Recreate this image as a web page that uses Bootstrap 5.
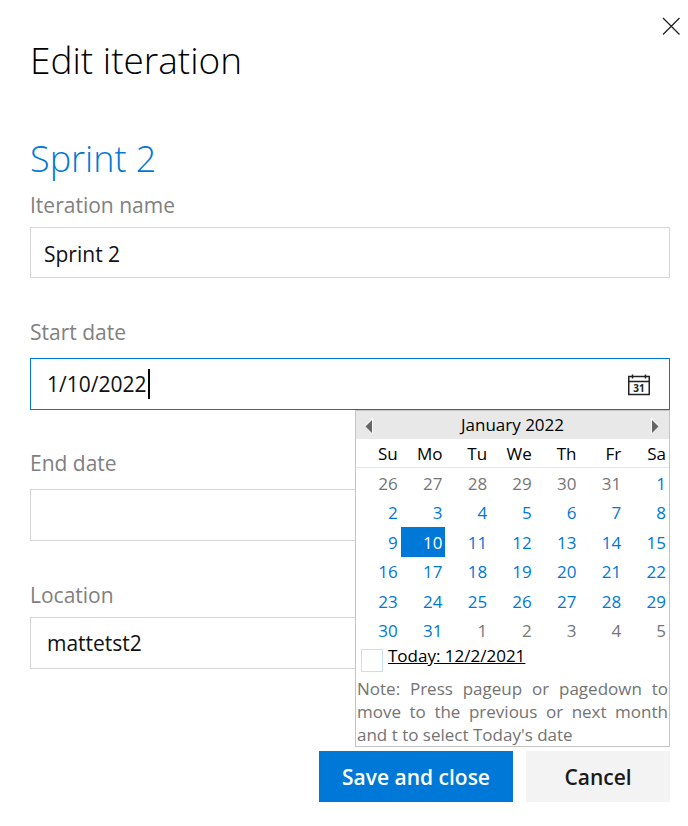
<!DOCTYPE html>
<html lang="en">
<head>
<meta charset="utf-8">
<meta name="viewport" content="width=device-width, initial-scale=1">
<title>Edit iteration</title>
<link href="https://cdn.jsdelivr.net/npm/bootstrap@5.3.0/dist/css/bootstrap.min.css" rel="stylesheet">
<style>
body { font-family: "Open Sans", "Noto Sans", sans-serif; font-size: 21px; line-height: 28px; color: #000; background: #fff; }
.dialog-pane { padding: 16px 18px 24px 30px; }
.close-btn { width: 20px; height: 20px; margin-right: -11px; }
.pane-title { font-size: 37px; font-weight: 300; line-height: 48px; }
.sprint-title { font-size: 36px; font-weight: 300; line-height: 48px; color: #0078d7; margin-top: 51px; }
.field-label { color: #808080; line-height: 28px; font-weight: 400; }
.field-block { margin-bottom: 40px; }
.start-block { margin-bottom: 39px; }
.field-box { border: 1px solid #d6d6d6; border-radius: 0; height: 52px; padding: 0 16px; font-size: 21px; color: #111; }
.name-box { padding: 2px 13px 0; height: 51px; }
.field-box:focus, .field-box:focus-within { border-color: #0078d7; box-shadow: none; }
.active-box { border-color: #0078d7; }
.date-input { width: 101px; font-size: 21px; color: #111; outline: 0; }
.text-caret { width: 2px; height: 30px; background: #000; }
.cal-toggle { width: 24px; height: 24px; margin-right: 2px; }
.cal-toggle text { font: 700 10px "Open Sans", sans-serif; }
.cal-pop { top: 100%; right: 0; width: 315px; border: 1px solid #c4c4c4; font-size: 17px; line-height: 22px; z-index: 5; }
.cal-head { height: 28px; background: #e8e8e8; padding: 0 8px; }
.cal-head button { width: 10px; height: 18px; }
.cal-grid { width: 100%; height: 206px; table-layout: fixed; border-collapse: separate; border-spacing: 0; text-align: right; }
.cal-grid th { font-weight: 400; border-bottom: 1px solid #e8e8e8; }
.cal-grid th, .cal-grid td { padding: 2px 3px 0 0; height: 29px; }
.cal-grid button { color: #0078d7; }
.cal-grid .outside button { color: #767676; }
.cal-grid .chosen { background: #0078d7; }
.cal-grid .chosen button { color: #fff; }
.today-check { width: 22px; height: 23px; border: 1px solid #c7e0f4; appearance: none; margin: 4px 5px 0; }
.cal-note { color: #737373; line-height: 23px; padding: 5px 1px 0; text-align: justify; font-size: 17px; }
.actions { gap: 13px; margin-top: 82px; }
.act-btn { height: 51px; border-radius: 0; border: 0; font-size: 21px; font-weight: 600; line-height: 28px; }
.act-save, .act-save:hover { background: #0078d7; color: #fff; width: 194px; }
.act-cancel, .act-cancel:hover { background: #f3f3f3; color: #1a1a1a; width: 144px; }
</style>
</head>
<body>
<main class="dialog-pane">
  <div class="d-flex justify-content-end">
    <button type="button" class="close-btn btn p-0 border-0 d-flex" aria-label="Close">
      <svg width="20" height="20" viewBox="0 0 20 20" fill="none" stroke="#222" stroke-width="1.3"><path d="M2 2l16.500 16.500M18.500 2l-16.500 16.500"/></svg>
    </button>
  </div>
  <h1 class="pane-title mb-0">Edit iteration</h1>
  <h2 class="sprint-title mb-0">Sprint 2</h2>
  <form>
    <div class="field-block pt-2">
      <label class="field-label d-block mb-2" for="iter">Iteration name</label>
      <input class="form-control field-box name-box" id="iter" type="text" value="Sprint 2">
    </div>
    <div class="start-block">
      <label class="field-label d-block mb-2 pb-1" for="start">Start date</label>
      <div class="position-relative">
        <div class="field-box active-box d-flex align-items-center">
          <input class="date-input border-0 p-0 bg-transparent" id="start" type="text" value="1/10/2022">
          <span class="text-caret"></span>
          <button type="button" class="cal-toggle btn p-0 border-0 d-flex ms-auto" aria-label="Open calendar">
            <svg width="24" height="24" viewBox="0 0 24 24" fill="none" stroke="#222"><path stroke-width="1.5" d="M1.750 4.500h20.500v18h-20.500zM1.750 9.500h20.500"/><path stroke-width="1.500" d="M5.500 2.500v4M18.500 2.500v4"/><text x="12" y="20" text-anchor="middle" fill="#222" stroke="none">31</text></svg>
          </button>
        </div>
        <div class="cal-pop position-absolute bg-white">
          <div class="cal-head d-flex align-items-center justify-content-between">
            <button type="button" class="btn p-0 border-0 d-flex" aria-label="Previous month"><svg width="10" height="18" viewBox="0 0 10 18"><path d="M9 1v17L1 10z" fill="#fff" opacity=".7"/><path d="M8 4v13L1.500 10.500z" fill="#666"/></svg></button>
            <span>January 2022</span>
            <button type="button" class="btn p-0 border-0 d-flex" aria-label="Next month"><svg width="10" height="18" viewBox="0 0 10 18"><path d="M0 1v17l8-8z" fill="#fff" opacity=".7"/><path d="M1 4v13l6.500-6.500z" fill="#666"/></svg></button>
          </div>
          <table class="cal-grid">
            <thead><tr><th>Su</th><th>Mo</th><th>Tu</th><th>We</th><th>Th</th><th>Fr</th><th>Sa</th></tr></thead>
            <tbody id="days"></tbody>
          </table>
          <div class="d-flex">
            <input class="today-check" type="checkbox" id="today">
            <label for="today" class="text-decoration-underline">Today: 12/2/2021</label>
          </div>
          <p class="cal-note mb-0">Note: Press pageup or pagedown to move to the previous or next month and t to select Today's date</p>
        </div>
      </div>
    </div>
    <div class="field-block">
      <label class="field-label d-block mb-2 pb-1" for="end">End date</label>
      <input class="form-control field-box" id="end" type="text">
    </div>
    <div>
      <label class="field-label d-block mb-2" for="loc">Location</label>
      <input class="form-control field-box" id="loc" type="text" value="mattetst2">
    </div>
    <div class="actions d-flex justify-content-end">
      <button type="button" class="btn act-btn act-save p-0">Save and close</button>
      <button type="button" class="btn act-btn act-cancel p-0">Cancel</button>
    </div>
  </form>
</main>
<script>
// Six weeks starting on Sunday, December 26, 2021
const body = document.getElementById('days');
for (let w = 0; w < 6; w++) {
  const row = body.insertRow();
  for (let d = 0; d < 7; d++) {
    const date = new Date(2021, 11, 26 + w * 7 + d);
    const cell = row.insertCell();
    const inMonth = date.getMonth() === 0;
    if (!inMonth) cell.className = 'outside';
    else if (date.getDate() === 10) cell.className = 'chosen';
    const b = document.createElement('button');
    b.type = 'button';
    b.className = 'border-0 p-0 bg-transparent';
    b.textContent = date.getDate();
    cell.append(b);
  }
}
</script>
<script src="https://cdn.jsdelivr.net/npm/bootstrap@5.3.0/dist/js/bootstrap.bundle.min.js"></script>
</body>
</html>
